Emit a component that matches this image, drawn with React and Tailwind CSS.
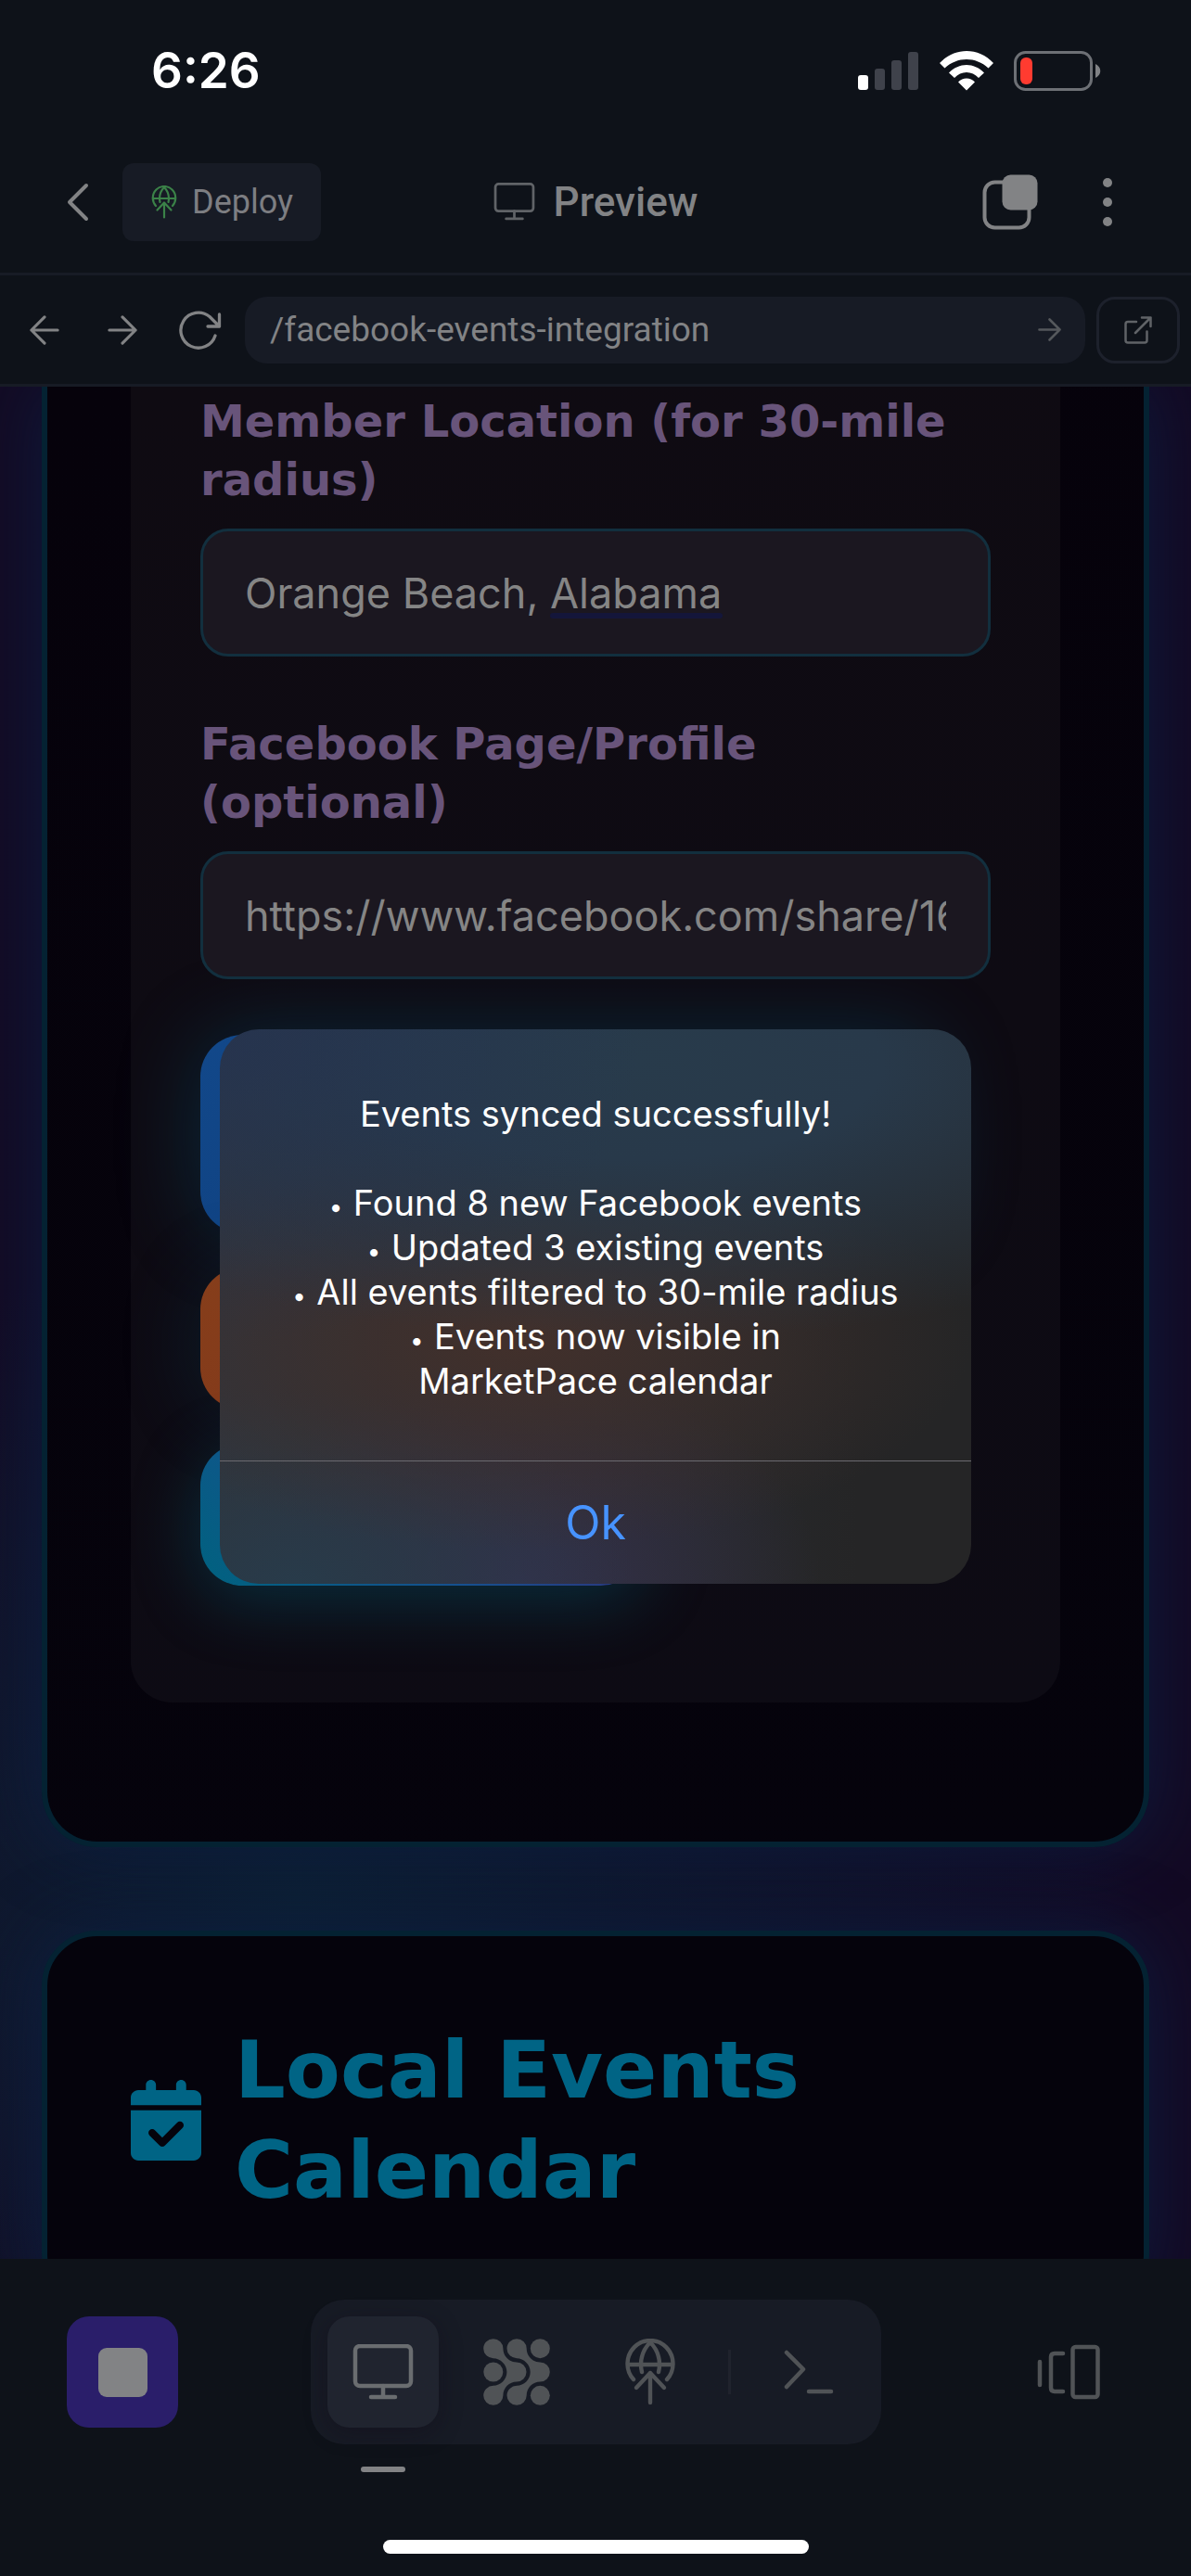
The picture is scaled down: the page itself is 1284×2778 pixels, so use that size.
import { FaCalendarCheck } from "react-icons/fa6";

function GlobeUp({ className }) {
  return (
    <svg viewBox="0 0 72 72" className={className} fill="none" stroke="currentColor" strokeWidth="4.4" strokeLinecap="round" strokeLinejoin="round" aria-hidden="true">
      <path d="M18 44 A24.5 25 0 1 1 54 44" />
      <path d="M12 28 H60" />
      <path d="M36 4 C29 11 26 20 26 28 C26 31 26.300 33 27 36 M36 4 C43 11 46 20 46 28 C46 31 45.700 33 45 36" />
      <path d="M36 69 V37 M21 53 L36 37 L51 53" />
    </svg>
  );
}

function Monitor({ className, stroke }) {
  return (
    <svg viewBox="0 0 66 60" className={className} fill="none" stroke="currentColor" strokeWidth={stroke} strokeLinecap="round" strokeLinejoin="round" aria-hidden="true">
      <rect x="3" y="2" width="60" height="43" rx="5" />
      <path d="M33 45 V57 M20 57 H46" />
    </svg>
  );
}

function AgentGrid({ className }) {
  const wave =
    "M21.400 10.700 C21.400 19 28 25.500 36 25.500 A10.500 10.500 0 0 1 36 46.500 C28 46.500 21.400 53 21.400 61.300 A10.600 10.500 0 1 1 10.800 50.800 C18.500 50.800 25.400 44 25.400 36 C25.400 28 18.500 21.200 10.800 21.200 A10.600 10.500 0 1 1 21.400 10.700 Z";
  return (
    <svg viewBox="0 0 72 72" className={className} fill="currentColor" aria-hidden="true">
      <path d={wave} />
      <path d={wave} transform="translate(25.300 0)" />
      <circle cx="10.800" cy="36" r="10.500" />
      <circle cx="61.300" cy="10.700" r="10.500" />
      <circle cx="61.300" cy="61.300" r="10.500" />
    </svg>
  );
}

function StatusBar() {
  return (
    <div className="flex h-[141px] shrink-0 items-center justify-between pt-3 pr-[96px] pl-[163px]">
      <span className="text-[53px] leading-none font-semibold text-white">6:26</span>
      <div className="flex items-center">
        <svg viewBox="0 0 66 43" className="mr-[22px] h-[43px] w-[66px]" fill="#3f424b" role="img" aria-label="Signal">
          <rect x="0" y="26" width="11" height="16" rx="3" fill="#fff" />
          <rect x="18" y="19" width="11" height="23" rx="3" />
          <rect x="36" y="10" width="11" height="32" rx="3" />
          <rect x="54" y="1" width="11" height="41" rx="3" />
        </svg>
        <svg viewBox="0 0 58 43" className="mr-[22px] h-[43px] w-[58px]" fill="#fff" role="img" aria-label="Wi-Fi">
          <path d="M0 13 C16 -4.300 42 -4.300 58 13 L52.500 18.500 C39 5.800 19 5.800 5.500 18.500 Z" />
          <path d="M10 23.500 C21 12 37 12 48 23.500 L42 29 C35 21 23 21 16 29 Z" />
          <path d="M20 33.500 C25 28 33 28 38 33.500 L29 42.500 Z" />
        </svg>
        <svg viewBox="0 0 95 43" className="h-[43px] w-[95px]" role="img" aria-label="Battery low">
          <rect x="1.500" y="1.500" width="82" height="40" rx="11" fill="none" stroke="#6d7075" strokeWidth="3" />
          <rect x="7" y="7" width="13" height="29" rx="6" fill="#ff3b30" />
          <path d="M88 14 C95 17 95 26 88 29 Z" fill="#808285" />
        </svg>
      </div>
    </div>
  );
}

function Header() {
  return (
    <header className="grid h-[156px] shrink-0 grid-cols-[1fr_auto_1fr] items-center border-b-3 border-[#171b25] px-[60px] font-[Roboto,sans-serif] text-[#828385]">
      <div className="flex items-center gap-6">
        <button type="button" aria-label="Back" className="flex h-[84px] w-12 items-center justify-center">
          <svg viewBox="0 0 24 42" className="h-[42px] w-6" fill="none" stroke="currentColor" strokeWidth="4" strokeLinecap="round" strokeLinejoin="round" aria-hidden="true">
            <path d="M21 3 L3 21 L21 39" />
          </svg>
        </button>
        <button type="button" className="flex h-[84px] items-center gap-3 rounded-xl bg-[#171b25] pr-[30px] pl-[27px] text-[36px] text-[#7d7e82]">
          <GlobeUp className="h-9 w-9 text-[#3b8248]" />
          Deploy
        </button>
      </div>
      <h1 className="flex items-center gap-5 text-[44px] font-medium">
        <Monitor stroke="4" className="h-[41px] w-[45px] text-[#606367]" />
        Preview
      </h1>
      <div className="flex items-center justify-end gap-[57px] pr-3">
        <button type="button" aria-label="Tabs">
          <svg viewBox="0 0 60 60" className="size-[60px]" aria-hidden="true">
            <rect x="2.500" y="8.500" width="48" height="49" rx="11" fill="none" stroke="#828385" strokeWidth="4" />
            <rect x="21.500" y="0.500" width="38" height="38" rx="9" fill="#828385" />
          </svg>
        </button>
        <button type="button" aria-label="More" className="flex w-9 flex-col items-center gap-[11px]">
          <span className="size-[10px] rounded-full bg-[#828385]" />
          <span className="size-[10px] rounded-full bg-[#828385]" />
          <span className="size-[10px] rounded-full bg-[#828385]" />
        </button>
      </div>
    </header>
  );
}

function Arrow({ className, left, stroke = 3.3 }) {
  return (
    <svg viewBox="0 0 34 34" className={className} fill="none" stroke="currentColor" strokeWidth={stroke} strokeLinecap="round" strokeLinejoin="round" aria-hidden="true">
      <path d={left ? "M32 17 H2 M17 2 L2 17 L17 32" : "M2 17 H32 M17 2 L32 17 L17 32"} />
    </svg>
  );
}

function AddressBar() {
  return (
    <nav className="flex h-[120px] shrink-0 items-center gap-3 border-b-3 border-[#171b25] px-3 font-[Roboto,sans-serif] text-[#828385]">
      <div className="flex gap-3">
        <button type="button" aria-label="Go back" className="flex h-[72px] w-[72px] items-center justify-center">
          <Arrow left className="size-8" />
        </button>
        <button type="button" aria-label="Go forward" className="flex h-[72px] w-[72px] items-center justify-center">
          <Arrow className="size-8" />
        </button>
        <button type="button" aria-label="Reload" className="flex h-[72px] w-[72px] items-center justify-center">
          <svg viewBox="0 0 46 42" className="h-[42px] w-[46px]" fill="none" stroke="currentColor" strokeWidth="3.300" strokeLinecap="round" strokeLinejoin="round" aria-hidden="true">
            <path d="M39 27 A19 19 0 1 1 33 6.500 L43.500 17 M43.500 4 V17 H31" />
          </svg>
        </button>
      </div>
      <div className="flex h-[72px] min-w-0 flex-1 items-center rounded-3xl bg-[#171b25] pr-[26px] pl-[27px]">
        <input type="text" aria-label="Page path" defaultValue="/facebook-events-integration" className="min-w-0 flex-1 bg-transparent text-[37px] outline-none" />
        <button type="button" aria-label="Open path" className="text-[#55585c]">
          <Arrow stroke={3.5} className="size-[25px]" />
        </button>
      </div>
      <button type="button" aria-label="Open in new tab" className="flex h-[72px] w-[90px] items-center justify-center rounded-[20px] border-3 border-[#1d212c] text-[#606367]">
        <svg viewBox="0 0 30 30" className="size-[30px]" fill="none" stroke="currentColor" strokeWidth="2.500" strokeLinecap="round" strokeLinejoin="round" aria-hidden="true">
          <path d="M13 6 H4 Q1.500 6 1.500 8.500 V26 Q1.500 28.500 4 28.500 H22 Q24.500 28.500 24.500 26 V16.500 M19 1.500 H28.500 V11 M28.500 1.500 L12 18" />
        </svg>
      </button>
    </nav>
  );
}

function Field({ id, label, value, children }) {
  return (
    <div className="flex flex-col gap-[21px]">
      <label htmlFor={id} className="text-[48px] leading-[63px] font-bold text-[#68547a]">
        {label}
      </label>
      <div className="relative">
        <input
          id={id}
          type="text"
          defaultValue={value}
          className="h-[138px] w-full rounded-[30px] border-3 border-[#122f3e] bg-[#1b1720] px-[45px] font-[Inter,sans-serif] text-[45px] text-[#858585] outline-none"
        />
        {children}
      </div>
    </div>
  );
}

function Content() {
  return (
    <main className="min-h-0 flex-1 overflow-hidden bg-[radial-gradient(ellipse_70%_35%_at_25%_81%,#0d2034_0%,#0e183000_100%),linear-gradient(100deg,#130b24,#130a24)] px-[45px] font-[Verdana,'DejaVu_Sans',sans-serif]">
      <section className="rounded-b-[60px] border-x-6 border-b-6 border-[#042232] bg-[linear-gradient(170deg,#06020b,#05030c)] px-[90px] pb-[150px] shadow-[0_0_75px_rgba(12,30,66,0.8)]">
        <form className="flex flex-col rounded-b-[45px] bg-[linear-gradient(175deg,#0f0b12,#0d0b14)] px-[75px] pt-[6px] pb-[126px]">
          <Field id="location" label="Member Location (for 30-mile radius)" value="Orange Beach, Alabama">
            <span className="absolute top-[91px] left-[377px] h-[6px] w-[186px] rounded-full bg-[#14163a]" />
          </Field>
          <div className="mt-[63px]">
            <Field id="profile" label="Facebook Page/Profile (optional)" value="https://www.facebook.com/share/16" />
          </div>
          <div className="mt-[60px] flex flex-col items-start gap-[37px]">
            <button type="button" aria-label="Sync events" className="h-[214px] w-[93%] rounded-[45px] bg-[linear-gradient(135deg,#12488a,#0a3570)] shadow-[0_0_90px_rgba(0,110,150,0.3)]" />
            <button type="button" aria-label="Post event" className="h-[153px] w-[75%] rounded-[45px] bg-[linear-gradient(135deg,#863e1b,#7d2f18)] shadow-[0_6px_90px_rgba(0,110,150,0.18)]" />
            <button type="button" aria-label="View calendar" className="h-[153px] w-[56%] rounded-[45px] bg-[linear-gradient(45deg,#00627f,#16508f_45%,#3d2370)] shadow-[0_15px_75px_rgba(0,120,150,0.32)]" />
          </div>
        </form>
      </section>
      <section className="mt-[90px] rounded-[60px] border-6 border-[#042232] bg-[#05030c] px-[90px] py-[90px] shadow-[0_0_75px_rgba(12,30,66,0.8)]">
        <h2 className="flex items-center gap-9 text-[86px] leading-[108px] font-bold text-[#006485]">
          <FaCalendarCheck className="h-[87px] w-[76px] shrink-0" aria-hidden="true" />
          <span>Local Events Calendar</span>
        </h2>
      </section>
    </main>
  );
}

function Dock() {
  const item = "flex size-[120px] items-center justify-center rounded-3xl";
  return (
    <footer className="relative flex h-[342px] shrink-0 flex-col items-center justify-between bg-[#0e1219] pb-6">
      <div className="flex w-full items-center justify-between px-[72px] pt-11 text-[#505356]">
        <button type="button" aria-label="Stop" className="flex size-[120px] items-center justify-center rounded-3xl bg-[#2a1e6a]">
          <span className="size-[53px] rounded-[9px] bg-[#828385]" />
        </button>
        <div className="flex items-center gap-6 rounded-[36px] bg-[#171b25] p-[18px]">
          <button type="button" aria-label="Preview" className="relative flex size-[120px] items-center justify-center rounded-3xl bg-[#20242f] text-[#6a6d70] shadow-[0_6px_24px_rgba(16,10,24,0.35)]">
            <Monitor stroke="4.500" className="h-[60px] w-[66px]" />
            <span className="absolute top-[162px] h-[6px] w-12 rounded-full bg-[#828385]" />
          </button>
          <button type="button" aria-label="Agent" className={item}>
            <AgentGrid className="size-[72px]" />
          </button>
          <button type="button" aria-label="Deployments" className={item}>
            <GlobeUp className="size-[72px]" />
          </button>
          <span className="h-12 w-[3px] bg-[#20232d]" />
          <button type="button" aria-label="Shell" className={item}>
            <svg viewBox="0 0 54 48" className="h-12 w-[54px]" fill="none" stroke="currentColor" strokeWidth="4.500" strokeLinecap="round" strokeLinejoin="round" aria-hidden="true">
              <path d="M3 3 L21 21 L3 40 M27 45 H51" />
            </svg>
          </button>
        </div>
        <button type="button" aria-label="Switch tabs" className={item}>
          <svg viewBox="0 0 70 60" className="h-[60px] w-[70px]" fill="none" stroke="currentColor" strokeWidth="4.500" strokeLinecap="round" strokeLinejoin="round" aria-hidden="true">
            <rect x="39.500" y="3" width="27" height="54" rx="3" />
            <path d="M29 10 H20 Q16 10 16 14 V47 Q16 51 20 51 H29 M4 19 V44" />
          </svg>
        </button>
      </div>
      <div className="h-[15px] w-[459px] rounded-full bg-white" />
    </footer>
  );
}

function Bullet() {
  return <span className="mr-1 text-[26px] leading-none">• </span>;
}

function SyncDialog() {
  return (
    <div className="absolute inset-0 flex items-center justify-center pt-10">
      <div
        role="alertdialog"
        aria-labelledby="sync-title"
        className="w-[810px] max-w-full overflow-hidden rounded-[42px] bg-[#262626] bg-[radial-gradient(ellipse_at_0%_0%,rgba(35,50,85,0.6)_0%,rgba(35,50,85,0)_40%),radial-gradient(ellipse_95%_50%_at_55%_6%,#283b4b_0%,#28394a_35%,#28394a00_100%),radial-gradient(ellipse_60%_38%_at_40%_56%,#42302b_0%,#42302b00_100%),radial-gradient(ellipse_45%_35%_at_10%_100%,#283b4a_0%,#283b4a00_100%),radial-gradient(ellipse_40%_40%_at_40%_100%,#33304b_0%,#33304b00_100%),linear-gradient(90deg,#30333a,#252526_85%)] text-center text-white"
      >
        <div className="px-[60px] pt-[67px] pb-[62px] text-[38px] leading-[48px]">
          <p id="sync-title">Events synced successfully!</p>
          <ul className="mt-12">
            <li><Bullet /> Found 8 new Facebook events</li>
            <li><Bullet /> Updated 3 existing events</li>
            <li><Bullet /> All events filtered to 30-mile radius</li>
            <li>
              <Bullet /> Events now visible in
              <br />
              MarketPace calendar
            </li>
          </ul>
        </div>
        <button type="button" className="h-[133px] w-full border-t border-[#6b6a70] text-[50px] text-[#4793ff]">
          Ok
        </button>
      </div>
    </div>
  );
}

export default function App() {
  return (
    <div className="relative flex h-screen flex-col overflow-hidden bg-[#0e1219] font-[Inter,sans-serif]">
      <StatusBar />
      <Header />
      <AddressBar />
      <Content />
      <Dock />
      <SyncDialog />
    </div>
  );
}
